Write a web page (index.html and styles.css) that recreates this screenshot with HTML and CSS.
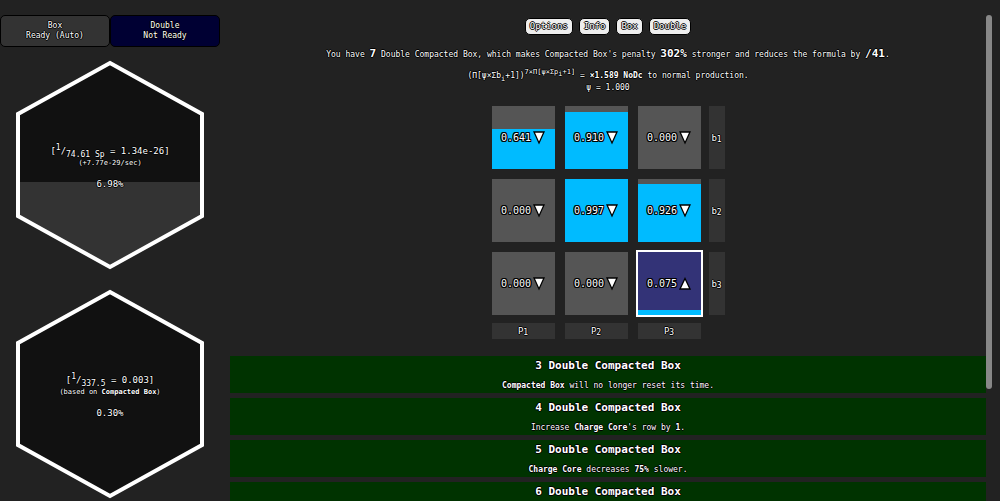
FILE: index.html
```html
<!DOCTYPE html>
<html lang="en">
<head>
<meta charset="utf-8">
<title>Double Compacted Box</title>
<link rel="stylesheet" href="styles.css">
</head>
<body>
<svg class="defs" aria-hidden="true">
  <symbol id="down" viewBox="0 0 12 14"><path d="M1 1H11L6 12Z" fill="#fff" stroke="#000" stroke-width="1.300"/></symbol>
  <symbol id="up" viewBox="0 0 12 14"><path d="M1 12H11L6 1.500Z" fill="#fff" stroke="#000" stroke-width="1.300"/></symbol>
</svg>
<div class="app">
  <aside class="side">
    <div class="resets">
      <button class="reset">Box<br>Ready (Auto)</button>
      <button class="reset reset-double">Double<br>Not Ready</button>
    </div>
    <section class="hex">
      <svg class="hex-shape" viewBox="0 0 190 210" aria-hidden="true">
        <path d="M95 3L187 54V156L95 207L3 156V54Z" fill="#111"/>
        <path d="M3 122H187V156L95 207L3 156Z" fill="#333"/>
        <path d="M95 3L187 54V156L95 207L3 156V54Z" fill="none" stroke="#fff" stroke-width="4"/>
      </svg>
      <div class="hex-text">
        <div>[<sup>1</sup>/<sub>74.61 Sp</sub> = 1.34e-26]</div>
        <div class="note">(+7.77e-29/sec)</div>
        <div class="percent">6.98%</div>
      </div>
    </section>
    <section class="hex">
      <svg class="hex-shape" viewBox="0 0 190 210" aria-hidden="true">
        <path d="M95 3L187 54V156L95 207L3 156V54Z" fill="#111" stroke="#fff" stroke-width="4"/>
      </svg>
      <div class="hex-text">
        <div>[<sup>1</sup>/<sub>337.5</sub> = 0.003]</div>
        <div class="note">(based on <b>Compacted Box</b>)</div>
        <div class="percent">0.30%</div>
      </div>
    </section>
  </aside>
  <main class="main">
    <nav class="tabs">
      <button>Options</button>
      <button>Info</button>
      <button>Box</button>
      <button>Double</button>
    </nav>
    <p class="summary">You have <b>7</b> Double Compacted Box, which makes Compacted Box's penalty <b>302%</b> stronger and reduces the formula by <b>/41</b>.</p>
    <div class="formula">
      <div>(Π[ψ×Σb<sub>i</sub>+1])<sup>7×Π[ψ×Σp<sub>i</sub>+1]</sup> = <b>×1.589 NoDc</b> to normal production.</div>
      <div>ψ = 1.000</div>
    </div>
    <div class="board">
      <div class="cells">
        <button class="cell" style="--fill:64.1%">0.641<svg class="arrow"><use href="#down"/></svg></button>
        <button class="cell" style="--fill:91%">0.910<svg class="arrow"><use href="#down"/></svg></button>
        <button class="cell" style="--fill:0%">0.000<svg class="arrow"><use href="#down"/></svg></button>
        <button class="cell" style="--fill:0%">0.000<svg class="arrow"><use href="#down"/></svg></button>
        <button class="cell" style="--fill:99.7%">0.997<svg class="arrow"><use href="#down"/></svg></button>
        <button class="cell" style="--fill:92.6%">0.926<svg class="arrow"><use href="#down"/></svg></button>
        <button class="cell" style="--fill:0%">0.000<svg class="arrow"><use href="#down"/></svg></button>
        <button class="cell" style="--fill:0%">0.000<svg class="arrow"><use href="#down"/></svg></button>
        <button class="cell selected" style="--fill:7.5%">0.075<svg class="arrow"><use href="#up"/></svg></button>
      </div>
      <div class="rows">
        <div class="label"><span>b<sub>1</sub></span></div>
        <div class="label"><span>b<sub>2</sub></span></div>
        <div class="label"><span>b<sub>3</sub></span></div>
      </div>
      <div class="columns">
        <div class="label"><span>P<sub>1</sub></span></div>
        <div class="label"><span>P<sub>2</sub></span></div>
        <div class="label"><span>P<sub>3</sub></span></div>
      </div>
    </div>
    <div class="milestones">
      <article class="milestone"><h2>3 Double Compacted Box</h2><p><b>Compacted Box</b> will no longer reset its time.</p></article>
      <article class="milestone"><h2>4 Double Compacted Box</h2><p>Increase <b>Charge Core</b>'s row by <b>1</b>.</p></article>
      <article class="milestone"><h2>5 Double Compacted Box</h2><p><b>Charge Core</b> decreases <b>75%</b> slower.</p></article>
      <article class="milestone"><h2>6 Double Compacted Box</h2></article>
    </div>
  </main>
  <div class="scrollbar"></div>
</div>
</body>
</html>
```
FILE: styles.css
```css
* {
  box-sizing: border-box;
}

body {
  margin: 0;
  background: #222;
  color: #fff;
  font: 8px/10px "DejaVu Sans Mono", monospace;
  text-align: center;
  text-shadow: 1px 0 #000, -1px 0 #000, 0 1px #000, 0 -1px #000;
}

button {
  font: inherit;
  color: inherit;
  text-shadow: inherit;
  cursor: pointer;
}

h2,
p {
  margin: 0;
}

sup,
sub {
  font-size: 8px;
  line-height: 0;
}

.defs {
  position: absolute;
  width: 0;
  height: 0;
}

.app {
  display: flex;
  height: 100vh;
  padding: 15px 8px 0 0;
  overflow: hidden;
}

.side {
  flex: 0 0 22vw;
  display: flex;
  flex-direction: column;
  align-items: center;
  gap: 19px;
}

.resets {
  align-self: stretch;
  display: flex;
  margin-bottom: -6px;
}

.reset {
  flex: 1;
  padding: 5px;
  background: #333;
  border: 1px solid #000;
  border-radius: 5px;
}

.reset-double {
  background: #003;
}

.hex {
  flex: none;
  display: grid;
  place-items: center;
}

.hex-shape,
.hex-text {
  grid-area: 1 / 1;
}

.hex-shape {
  display: block;
  width: 190px;
}

.hex-text {
  padding-top: 4px;
  font-size: 9px;
  line-height: 12px;
}

.note {
  font-size: 7px;
}

.percent {
  margin-top: 9px;
}

.main {
  flex: 1;
  min-width: 0;
  padding-left: 10px;
}

.tabs {
  display: flex;
  justify-content: center;
  gap: 6px;
  padding-top: 3px;
}

.tabs button {
  padding: 2px 4px;
  font-size: 9px;
  line-height: 11px;
  background: #eee;
  border: 1px solid #000;
  border-radius: 5px;
}

.summary {
  margin-top: 12px;
  line-height: 14px;
}

.summary b {
  font-size: 11px;
}

.formula {
  margin-top: 8px;
  line-height: 12px;
}

.formula sup,
.formula sub {
  font-size: 7px;
}

.board {
  display: grid;
  grid-template-columns: auto 16px;
  justify-content: center;
  gap: 8px;
  margin-top: 12px;
}

.cells {
  display: grid;
  grid-template-columns: repeat(3, 63px);
  grid-auto-rows: 63px;
  gap: 10px;
}

.cell {
  display: flex;
  align-items: center;
  justify-content: center;
  gap: 2px;
  padding: 0;
  border: 0;
  font-size: 10px;
  text-shadow: 1px 0 #000, -1px 0 #000, 0 1px #000, 0 -1px #000,
    1px 1px #000, -1px 1px #000, 1px -1px #000, -1px -1px #000;
  background: linear-gradient(to top, #0bf var(--fill), #555 var(--fill));
}

.selected {
  background: linear-gradient(to top, #0bf var(--fill), #337 var(--fill));
  outline: 2px solid #fff;
}

.arrow {
  width: 12px;
  height: 14px;
}

.rows {
  display: grid;
  gap: 10px;
}

.columns {
  display: grid;
  grid-template-columns: repeat(3, 1fr);
  gap: 10px;
}

.label {
  display: grid;
  place-items: center;
  min-height: 16px;
  background: #333;
  font-size: 9px;
}

.label sub {
  vertical-align: -1px;
}

.milestones {
  display: grid;
  gap: 5px;
  margin-top: 17px;
}

.milestone {
  min-height: 37px;
  padding: 3px 0 2px;
  background: #030;
}

.milestone h2 {
  margin-bottom: 8px;
  font-size: 11px;
  line-height: 14px;
}

.scrollbar {
  flex: none;
  width: 6px;
  height: 77%;
  background: #888;
  border-radius: 3px;
}
```
